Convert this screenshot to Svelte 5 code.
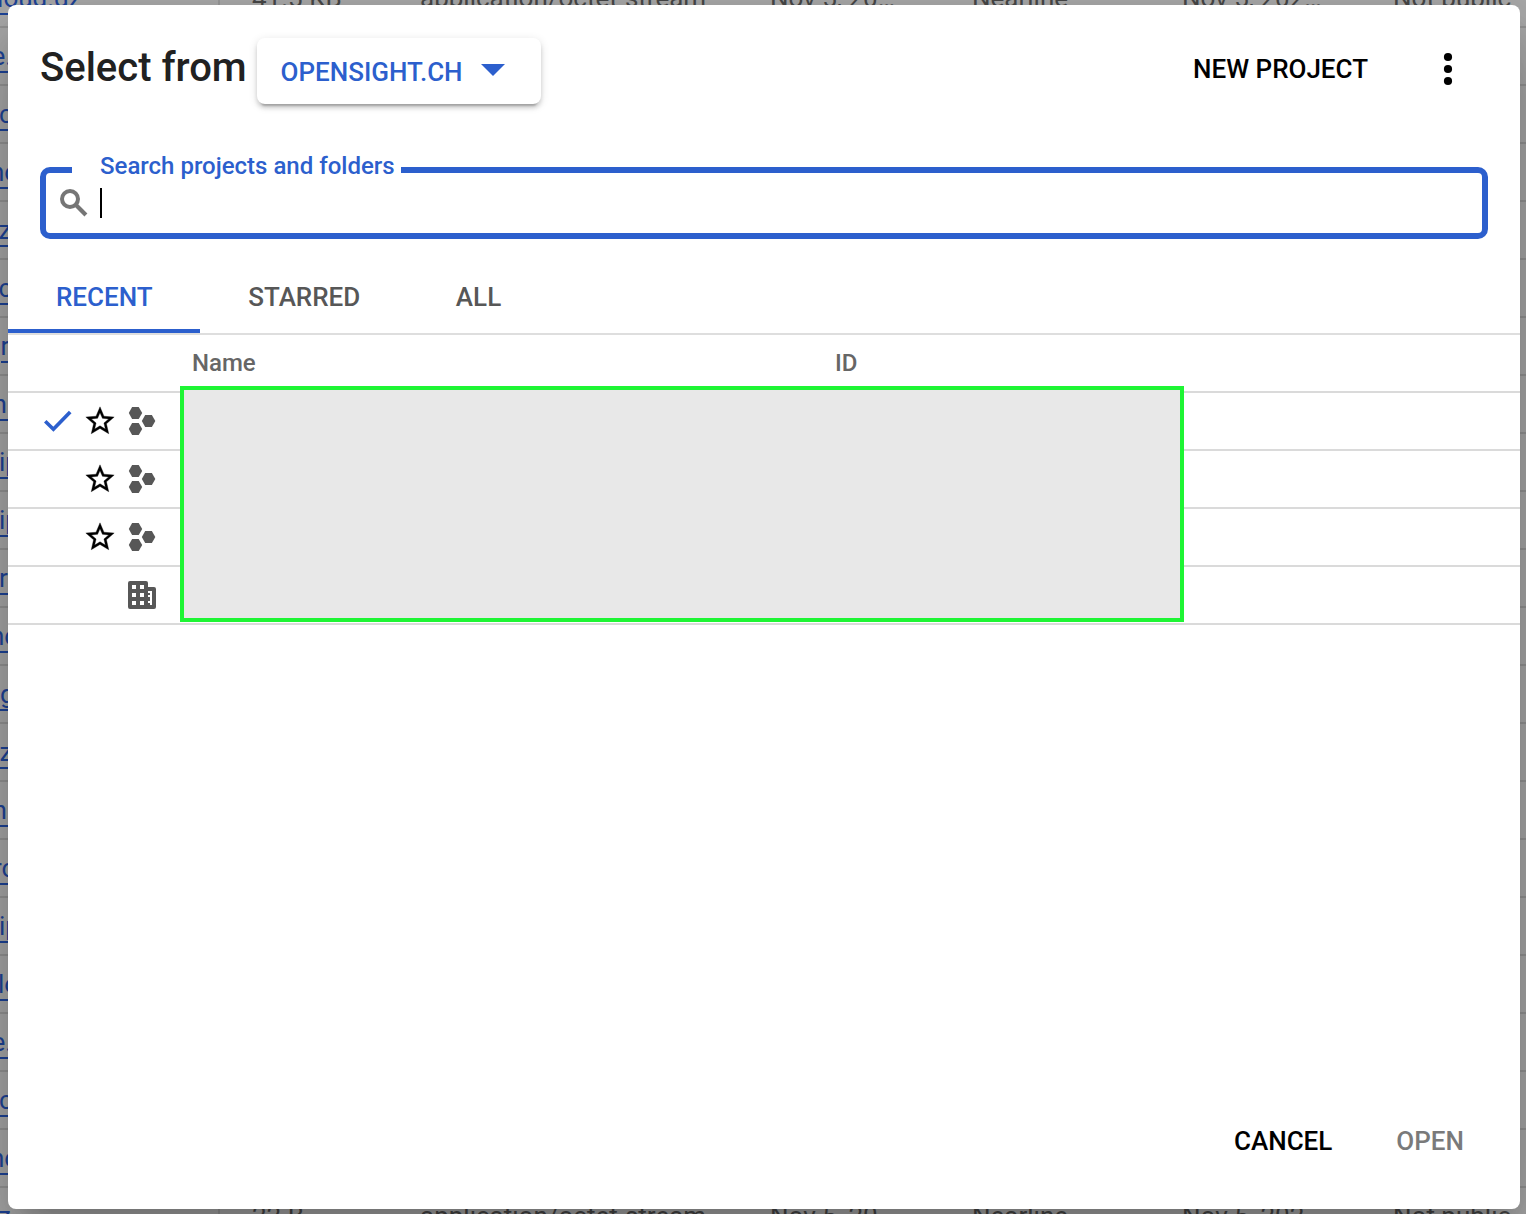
<script>
  const names = [
    { text: 'cloud.gz', x: -16.5 },
    { text: 'e.', x: -8.5 },
    { text: 'c', x: -1 },
    { text: 'nc', x: -10 },
    { text: 'z', x: -1.5 },
    { text: 'c', x: -1.5 },
    { text: 'r', x: 0.5 },
    { text: 'n', x: -7.5 },
    { text: 'ip', x: -1 },
    { text: 'ip', x: -1 },
    { text: 'r', x: -1 },
    { text: 'nc', x: -10 },
    { text: 'g', x: 0 },
    { text: 'z', x: -0.5 },
    { text: 'n', x: -7.5 },
    { text: 'rc', x: -7 },
    { text: 'ip', x: -1 },
    { text: 'lo', x: -2 },
    { text: 'e.', x: -8.5 },
    { text: 'c', x: -1 },
    { text: 'nc', x: -10 },
    { text: 'z', x: -2 }
  ];
  const rows = names.map((name, i) => ({
    ...name,
    size: i === 0 ? '41.5 KB' : '22 B',
    date: 'Nov 5, 20…',
    updated: 'Nov 5, 202…'
  }));

  const projects = [
    { current: true, kind: 'project' },
    { current: false, kind: 'project' },
    { current: false, kind: 'project' },
    { current: false, kind: 'organization' }
  ];
  const tabs = ['RECENT', 'STARRED', 'ALL'];
  let active = $state('RECENT');
</script>

<div class="screen">
  <div class="objects" aria-hidden="true">
    {#each rows as row}
      <div class="object">
        <span class="name"><span class="link" style:margin-left="{row.x}px">{row.text}</span></span>
        <span>{row.size}</span>
        <span>application/octet-stream</span>
        <span>{row.date}</span>
        <span>Nearline</span>
        <span>{row.updated}</span>
        <span>Not public</span>
      </div>
    {/each}
  </div>

  <div class="dialog" role="dialog" aria-label="Select from">
    <header>
      <h1>Select from</h1>
      <button class="org">
        <span>OPENSIGHT.CH</span>
        <svg width="24" height="12" viewBox="0 0 24 12"><path d="M0 0h24L12 12z" fill="#2c5fcd" /></svg>
      </button>
      <button class="new">NEW PROJECT</button>
      <button class="more" aria-label="More">
        <svg width="10" height="34" viewBox="0 0 10 34">
          <circle cx="5" cy="5" r="4.1" /><circle cx="5" cy="17" r="4.1" /><circle cx="5" cy="29" r="4.1" />
        </svg>
      </button>
    </header>

    <fieldset>
      <legend>Search projects and folders</legend>
      <svg class="search" width="28" height="28" viewBox="0 0 28 28" fill="none" stroke="#757575">
        <circle cx="10" cy="10" r="8" stroke-width="4" />
        <path d="M15.500 15.500L25.900 25.900" stroke-width="4.200" />
      </svg>
      <i class="caret"></i>
    </fieldset>

    <nav>
      {#each tabs as tab}
        <button class:active={tab === active} onclick={() => (active = tab)}>{tab}</button>
      {/each}
    </nav>

    <div class="table">
      <div class="head"><span>Name</span><span>ID</span></div>
      {#each projects as project}
        <div class="project">
          <span class="icon">
            {#if project.current}
              <svg width="28" height="22" viewBox="0 0 28 22"><path d="M1.200 11.200l8.200 8L26.200 2" fill="none" stroke="#2c5fcd" stroke-width="3.700" /></svg>
            {/if}
          </span>
          <span class="icon">
            {#if project.kind === 'project'}
              <svg width="34" height="34" viewBox="0 0 24 24"><path stroke="#000" stroke-width="0.25" d="M22 9.240l-7.190-.62L12 2 9.190 8.630 2 9.240l5.460 4.730L5.820 21 12 17.270 18.180 21l-1.630-7.030L22 9.240zM12 15.400l-3.760 2.270 1-4.280-3.320-2.880 4.380-.38L12 6.100l1.710 4.040 4.380.38-3.320 2.880 1 4.280L12 15.400z" /></svg>
            {/if}
          </span>
          <span class="icon">
            {#if project.kind === 'project'}
              <svg width="28" height="28" viewBox="0 0 28 28" fill="#575757">
                <path d="M4.100 0h6.600l3.500 6-3.500 6H4.100L.8 6z" />
                <path d="M4.100 16h6.600l3.500 6-3.500 6H4.100L.8 22z" />
                <path d="M17.200 8h6.700l3.400 6-3.400 6h-6.700l-3.400-6z" />
              </svg>
            {:else}
              <svg width="28" height="28" viewBox="0 0 28 28">
                <path fill="#575757" fill-rule="evenodd" d="M2 0h16q2 0 2 2v4h6q2 0 2 2v18q0 2-2 2H2q-2 0-2-2V2q0-2 2-2zM4 4v4h4V4zM12 4v4h4V4zM4 12v4h4v-4zM12 12v4h4v-4zM4 20v4h4v-4zM12 20v4h4v-4zM20 10v2h2v2h-2v2h2v4h-2v2h2v2h-2v0h4V10z" />
              </svg>
            {/if}
          </span>
        </div>
      {/each}
      <div class="redaction"></div>
    </div>

    <footer>
      <button>CANCEL</button>
      <button disabled>OPEN</button>
    </footer>
  </div>
</div>

<style>
  :global(body) { margin: 0; }
  .screen {
    position: relative;
    width: 1526px;
    height: 1214px;
    overflow: hidden;
    background: #abababff;
    font-family: Roboto, sans-serif;
    font-size: 26px;
  }
  button {
    padding: 0;
    border: 0;
    background: none;
    font: 500 26px/32px Roboto, sans-serif;
    color: #000;
  }
  svg { display: block; flex: none; }

  .objects { margin-top: -30px; }
  .object {
    display: grid;
    grid-template-columns: 252px 168px 350px 202px 210px 211px 1fr;
    box-sizing: border-box;
    height: 58px;
    padding-top: 12px;
    border-bottom: 2px solid #969696;
    line-height: 32px;
    white-space: nowrap;
    color: #484848;
  }
  .name {
    box-sizing: border-box;
    width: 220px;
    height: 56px;
    margin-top: -12px;
    padding-top: 12px;
    border-right: 2px solid #9a9a9a;
  }
  .link {
    display: inline-block;
    height: 31px;
    border-bottom: 2px solid #1e4499;
    padding-right: 4px;
    color: #1e4499;
  }

  .dialog {
    position: absolute;
    inset: 5px 6px 5px 8px;
    display: flex;
    flex-direction: column;
    border-radius: 8px;
    background: #fff;
    box-shadow: 0 22px 30px -14px rgba(0, 0, 0, 0.2), 0 48px 76px 6px rgba(0, 0, 0, 0.14), 0 18px 92px 16px rgba(0, 0, 0, 0.12);
  }
  header {
    display: flex;
    align-items: center;
    height: 128px;
    padding: 0 67px 0 32px;
  }
  h1 {
    width: 206px;
    margin: -2px 11px 0 0;
    font-size: 40px;
    line-height: 48px;
    font-weight: 500;
    white-space: nowrap;
    color: #212121;
  }
  .org {
    display: flex;
    align-items: center;
    gap: 18.5px;
    box-sizing: border-box;
    width: 284px;
    height: 66px;
    margin-top: 4px;
    padding: 2px 23.5px 0;
    border-radius: 8px;
    color: #2c5fcd;
    box-shadow: 0 6px 2px -4px rgba(0, 0, 0, 0.2), 0 4px 4px rgba(0, 0, 0, 0.14), 0 2px 10px rgba(0, 0, 0, 0.12);
  }
  .org svg { margin-top: -4px; }
  .new { margin-left: auto; }
  .more { margin-left: 75px; }

  fieldset {
    box-sizing: border-box;
    display: flex;
    height: 89px;
    margin: 17px 32px 0;
    padding: 0 14px;
    border: 6px solid #2c5fcd;
    border-radius: 10px;
  }
  legend {
    box-sizing: border-box;
    width: 329px;
    margin-left: 12px;
    padding: 0 0 8px 28px;
    font-size: 24px;
    line-height: 32px;
    font-weight: 500;
    white-space: nowrap;
    color: #2c5fcd;
  }
  .search { margin-top: -1px; }
  .caret {
    width: 2px;
    height: 30px;
    margin: -2px 0 0 12px;
    background: #000;
  }

  nav {
    display: flex;
    box-sizing: border-box;
    height: 96px;
    padding-top: 20px;
    border-bottom: 2px solid #dedede;
  }
  nav button {
    height: 74px;
    padding: 6px 47.6px 0 48px;
    border-bottom: 4px solid transparent;
    color: #575757;
  }
  nav .active { border-color: #2c5fcd; color: #2c5fcd; }

  .table { position: relative; }
  .head {
    display: grid;
    grid-template-columns: 643px 1fr;
    height: 56px;
    padding-left: 184px;
    border-bottom: 2px solid #dadada;
    font-size: 24px;
    line-height: 56px;
    font-weight: 500;
    color: #666;
  }
  .project {
    display: grid;
    grid-template-columns: 42px 42px 42px;
    height: 56px;
    padding-left: 29px;
    border-bottom: 2px solid #dadada;
  }
  .icon { display: flex; align-items: center; justify-content: center; }
  .redaction {
    position: absolute;
    left: 172px;
    top: 51px;
    box-sizing: border-box;
    width: 1004px;
    height: 236px;
    border: 4px solid #1ef534;
    background: #e8e8e8;
  }

  footer {
    display: flex;
    justify-content: flex-end;
    gap: 64px;
    margin-top: auto;
    padding: 0 56px 52px;
  }
  footer button:disabled { color: #7a7a7a; }
</style>
